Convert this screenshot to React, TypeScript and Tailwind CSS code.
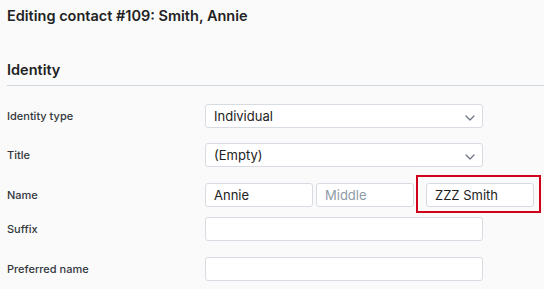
import React from "react";

function Chevron() {
  return (
    <svg width="10" height="6" viewBox="0 0 10 6" className="absolute right-[7px] top-[10px]" fill="none">
      <path d="M1 1l4 4 4-4" stroke="#6b7280" strokeWidth="1.2" strokeLinecap="round" strokeLinejoin="round" />
    </svg>
  );
}

function Label({ children }: { children: React.ReactNode }) {
  return <div className="w-[198px] shrink-0 text-[11px] font-medium text-[#33373c]">{children}</div>;
}

function Select({ value }: { value: string }) {
  return (
    <div className="relative h-[24px] w-[278px] rounded-[3px] border border-[#d6dce1] bg-white pl-[8px] text-[13px] leading-[22px] text-[#222]">
      {value}
      <Chevron />
    </div>
  );
}

function Input({ value, placeholder, w }: { value?: string; placeholder?: string; w: string }) {
  return (
    <div className={`h-[24px] ${w} rounded-[3px] border border-[#d6dce1] bg-white pl-[8px] text-[13px] leading-[22px]`}>
      {value ? <span className="text-[#222]">{value}</span> : <span className="text-[#8e9aa6]">{placeholder}</span>}
    </div>
  );
}

export default function App() {
  return (
    <div className="min-h-screen bg-[#fafafa] font-['Inter',sans-serif]">
      <h1 className="pl-[7px] pt-[6px] text-[14.5px] font-semibold leading-[20px] text-[#222]">
        Editing contact #109: Smith, Annie
      </h1>
      <div className="ml-[7px] mt-[34px] border-b border-[#d0d7de] pb-[5px] text-[14.5px] font-semibold leading-[20px] text-[#222]">
        Identity
      </div>
      <div className="flex flex-col pl-[7px] pt-[18px]">
        <div className="flex items-center">
          <Label>Identity type</Label>
          <Select value="Individual" />
        </div>
        <div className="mt-[15px] flex items-center">
          <Label>Title</Label>
          <Select value="(Empty)" />
        </div>
        <div className="mt-[16px] flex items-center">
          <Label>Name</Label>
          <Input value="Annie" w="w-[108px]" />
          <div className="ml-[3px]">
            <Input placeholder="Middle" w="w-[98px]" />
          </div>
          <div className="relative ml-[12px]">
            <Input value="ZZZ Smith" w="w-[108px]" />
            <div className="pointer-events-none absolute -bottom-[6px] -left-[10px] -right-[7px] -top-[8px] border-2 border-[#d0021b]" />
          </div>
        </div>
        <div className="mt-[10px] flex items-center">
          <Label>Suffix</Label>
          <Input w="w-[278px]" />
        </div>
        <div className="mt-[16px] flex items-center">
          <Label>Preferred name</Label>
          <Input w="w-[278px]" />
        </div>
      </div>
    </div>
  );
}
